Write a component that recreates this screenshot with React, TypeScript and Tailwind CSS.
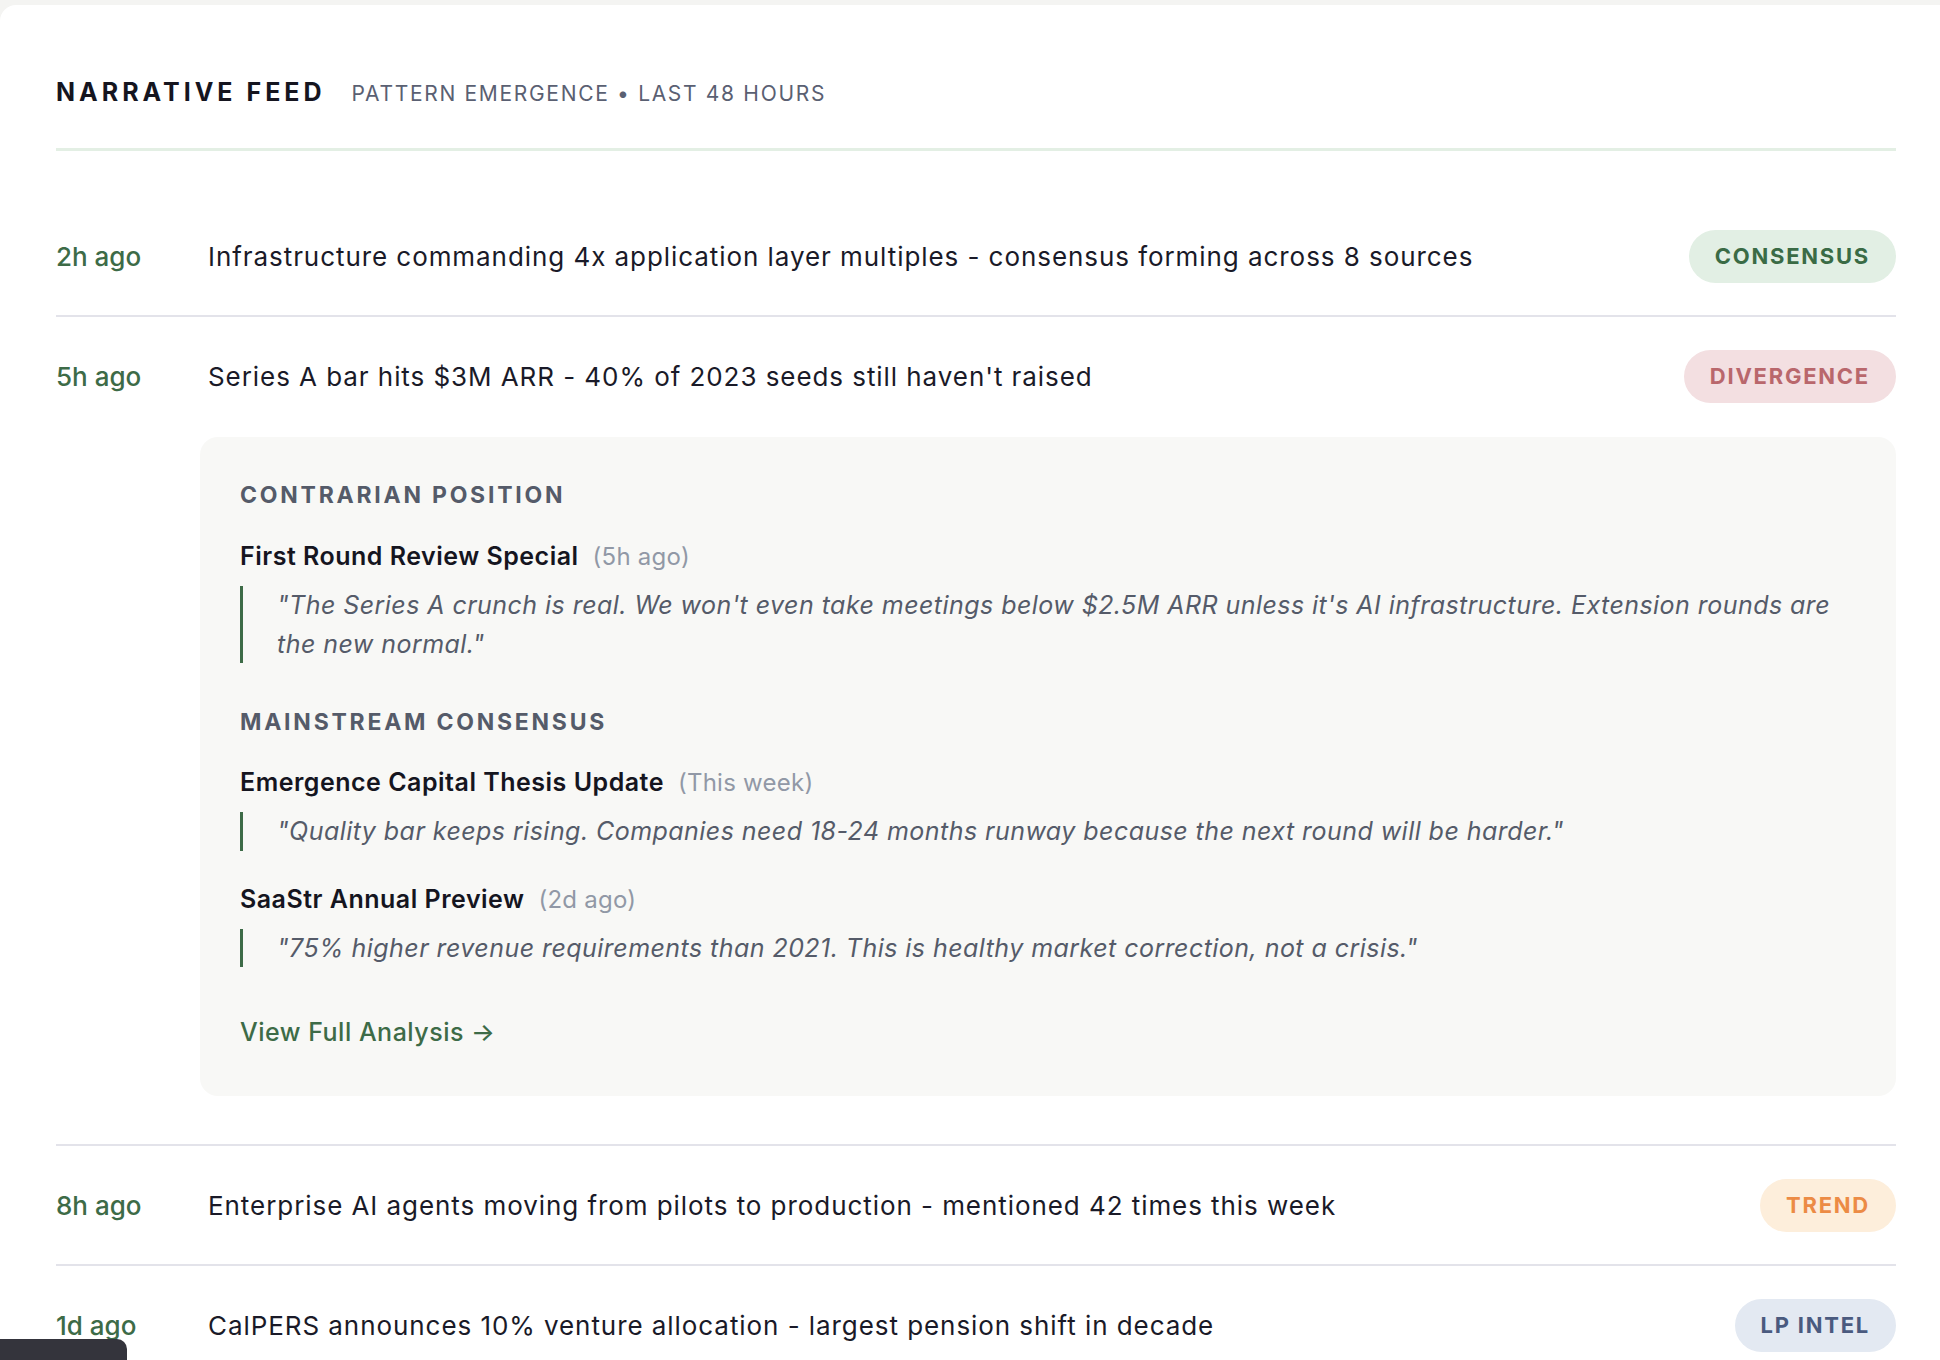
const feed = [
  {
    time: '2h ago',
    text: 'Infrastructure commanding 4x application layer multiples - consensus forming across 8 sources',
    tag: 'CONSENSUS',
    tagClass: 'bg-[#e2efe4] text-[#3a6b45]',
  },
  {
    time: '5h ago',
    text: "Series A bar hits $3M ARR - 40% of 2023 seeds still haven't raised",
    tag: 'DIVERGENCE',
    tagClass: 'bg-[#f3dfe1] text-[#b9676c]',
    expanded: true,
  },
  {
    time: '8h ago',
    text: 'Enterprise AI agents moving from pilots to production - mentioned 42 times this week',
    tag: 'TREND',
    tagClass: 'bg-[#fdeedb] text-[#ec8b45]',
  },
  {
    time: '1d ago',
    text: 'CalPERS announces 10% venture allocation - largest pension shift in decade',
    tag: 'LP INTEL',
    tagClass: 'bg-[#e3e9f2] text-[#4a5a7f]',
  },
];

function Source({ name, when, quote, className = '' }: { name: string; when: string; quote: string; className?: string }) {
  return (
    <div className={className}>
      <div className="flex h-[36px] items-baseline leading-[36px]">
        <span className="text-[25px] font-semibold tracking-[0.02em] text-[#15151f]">{name}</span>
        <span className="ml-[14px] text-[24px] tracking-[0.01em] text-[#9198a6]">{when}</span>
      </div>
      <p className="mt-[12px] border-l-[3px] border-[#3d6b47] pl-[34px] text-[25px] leading-[38.5px] tracking-[0.018em] italic text-[#555b69]">
        {quote}
      </p>
    </div>
  );
}

function Analysis() {
  return (
    <div className="mt-[34px] mb-[16px] rounded-[18px] bg-[#f8f8f6] px-[40px] pt-[40px] pb-[46px]">
      <h3 className="text-[23px] leading-[36px] font-bold tracking-[0.12em] text-[#555b69]">CONTRARIAN POSITION</h3>
      <Source
        className="mt-[25px]"
        name="First Round Review Special"
        when="(5h ago)"
        quote={`"The Series A crunch is real. We won't even take meetings below $2.5M ARR unless it's AI infrastructure. Extension rounds are the new normal."`}
      />

      <h3 className="mt-[41px] text-[23px] leading-[36px] font-bold tracking-[0.12em] text-[#555b69]">MAINSTREAM CONSENSUS</h3>
      <Source
        className="mt-[24px]"
        name="Emergence Capital Thesis Update"
        when="(This week)"
        quote={`"Quality bar keeps rising. Companies need 18-24 months runway because the next round will be harder."`}
      />
      <Source
        className="mt-[30px]"
        name="SaaStr Annual Preview"
        when="(2d ago)"
        quote={`"75% higher revenue requirements than 2021. This is healthy market correction, not a crisis."`}
      />

      <a className="mt-[47px] block text-[25px] leading-[36px] font-medium tracking-[0.02em] text-[#3d6b47]">View Full Analysis →</a>
    </div>
  );
}

export default function App() {
  return (
    <div className="min-h-screen bg-[#f4f4f2] pt-[5px] font-['Inter','Liberation_Sans',sans-serif]">
      <div className="min-h-[1355px] rounded-tl-[16px] bg-white pt-[71px] pl-[56px] pr-[44px]">
        {/* Header */}
        <div className="flex items-baseline gap-[26px] border-b-[3px] border-[#e3efe4] pb-[38px] leading-[32px]">
          <h1 className="text-[25px] font-bold tracking-[0.16em] text-[#15151f]">NARRATIVE FEED</h1>
          <span className="text-[21px] tracking-[0.08em] text-[#5a6072]">PATTERN EMERGENCE • LAST 48 HOURS</span>
        </div>

        {/* Feed */}
        <div className="mt-[46px]">
          {feed.map((item, i) => (
            <div
              key={item.time}
              className={`pt-[33px] pb-[32px] ${i < feed.length - 1 ? 'border-b-2 border-[#e3e3ea]' : ''}`}
            >
              <div className="flex h-[53px] items-center">
                <span className="w-[152px] shrink-0 text-[26px] font-medium text-[#3d6b47]">{item.time}</span>
                <span className="text-[26px] tracking-[0.036em] text-[#1a1a28]">{item.text}</span>
                <span
                  className={`ml-auto flex h-[53px] shrink-0 items-center rounded-full px-[26px] text-[22px] font-bold tracking-[0.08em] ${item.tagClass}`}
                >
                  {item.tag}
                </span>
              </div>
              {item.expanded && (
                <div className="pl-[144px]">
                  <Analysis />
                </div>
              )}
            </div>
          ))}
        </div>
      </div>

      {/* Bottom-left dock tab */}
      <div className="fixed bottom-0 left-0 h-[21px] w-[127px] rounded-tr-[10px] bg-[#34343c]" />
    </div>
  );
}
